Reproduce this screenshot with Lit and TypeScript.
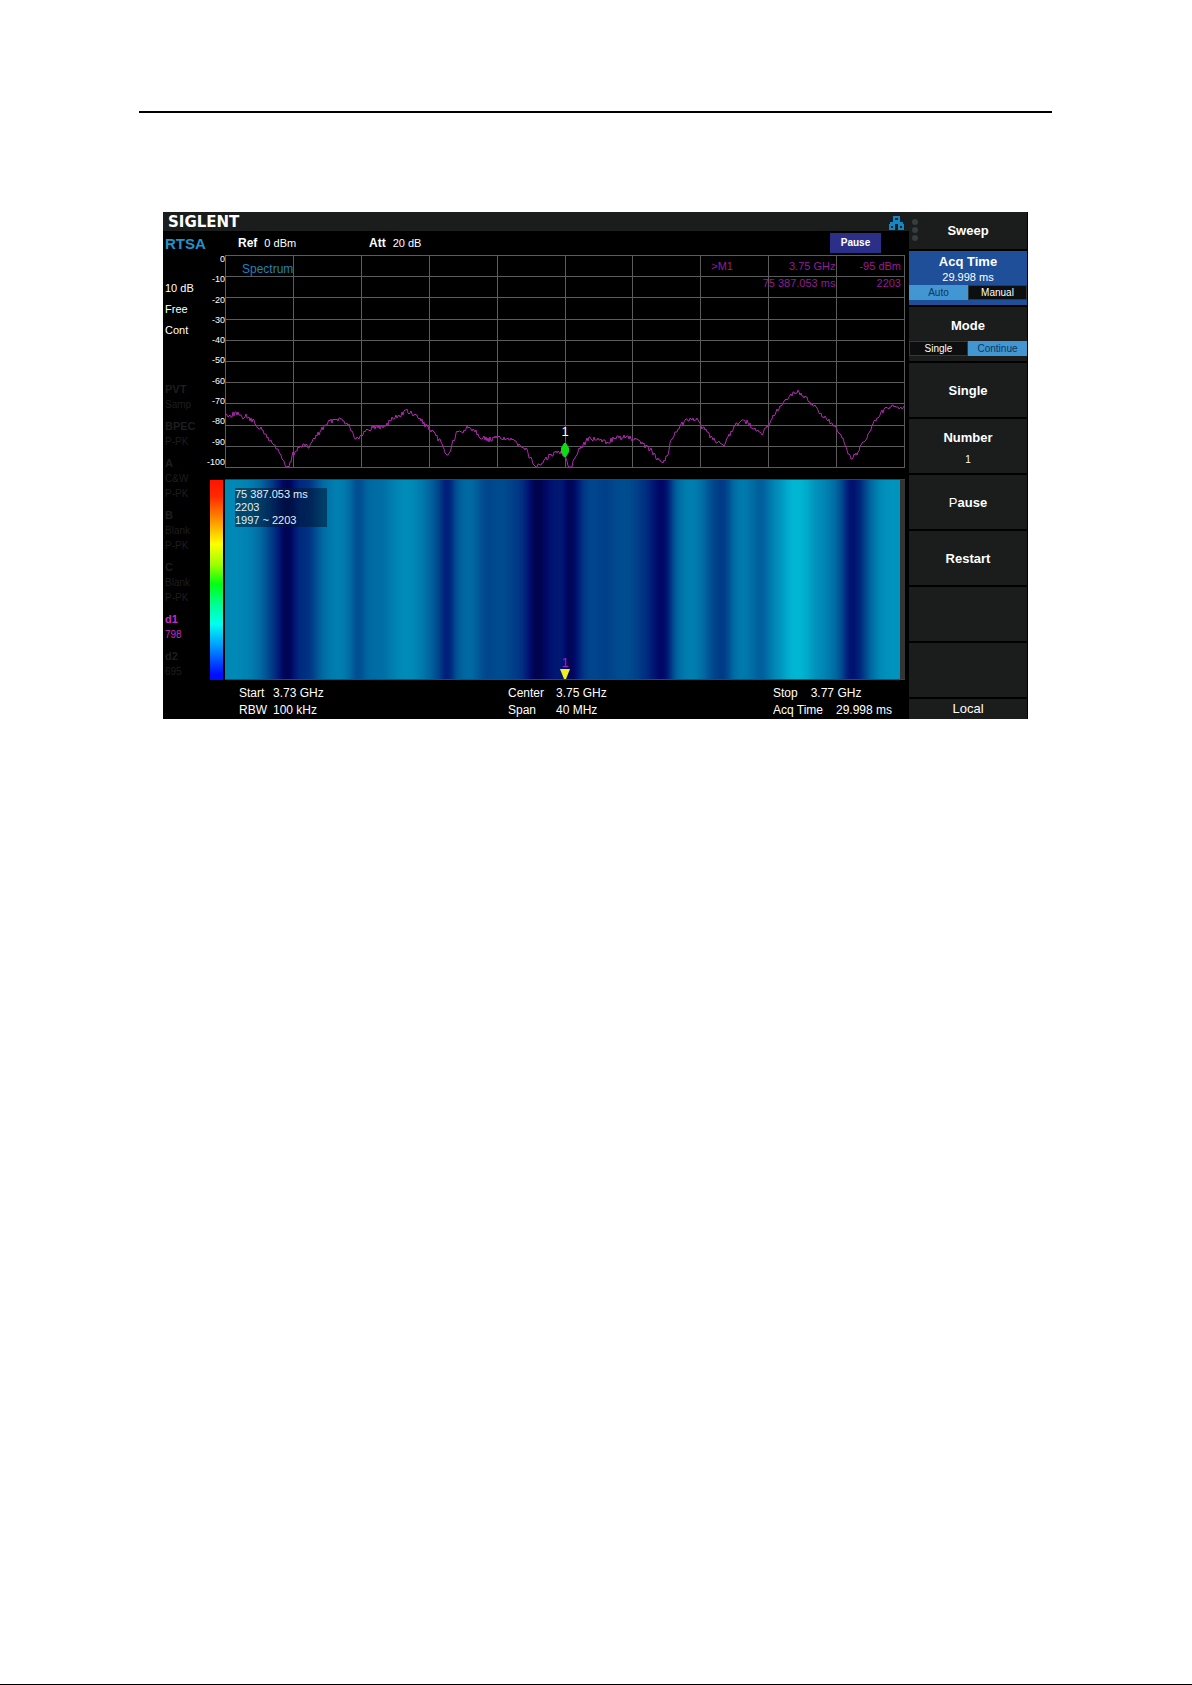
import { LitElement, html, svg, css } from "lit";
import { customElement, property } from "lit/decorators.js";
import { classMap } from "lit/directives/class-map.js";

type Point = [number, number];

const PLOT_W = 680;
const PLOT_H = 213;

/* Spectrum envelope in plot units, 0 dBm at y = 0 and -100 dBm at y = 213. */
const ENVELOPE: Point[] = [
  [0, 160], [5, 160], [12, 158], [15, 162], [20, 161], [28, 166], [35, 173], [43, 183], [48, 189],
  [54, 196], [58, 206], [61, 212], [64, 212], [68, 199], [72, 194], [78, 190], [84, 192], [89, 184],
  [97, 174], [103, 168], [111, 163], [118, 165], [124, 170], [129, 181], [134, 185], [139, 177],
  [148, 172], [158, 172], [167, 164], [175, 160], [181, 156], [187, 159], [195, 164], [202, 172],
  [208, 178], [215, 186], [219, 194], [223, 202], [227, 189], [232, 178], [238, 176], [243, 172],
  [249, 174], [255, 181], [262, 185], [268, 184], [275, 182], [282, 184], [290, 187], [297, 190],
  [302, 196], [307, 207], [312, 212], [317, 208], [323, 202], [330, 198], [335, 197], [340, 199],
  [342, 206], [344, 212], [347, 212], [350, 201], [356, 192], [362, 185], [368, 184], [382, 187],
  [388, 184], [398, 182], [408, 184], [417, 189], [425, 194], [431, 202], [438, 207], [442, 202],
  [445, 189], [450, 178], [456, 169], [465, 163], [473, 166], [479, 174], [487, 184], [495, 187],
  [500, 191], [504, 180], [510, 170], [517, 165], [523, 168], [529, 174], [536, 179], [542, 173],
  [548, 162], [557, 150], [565, 140], [572, 137], [582, 143], [592, 155], [602, 164], [611, 174],
  [618, 185], [623, 198], [626, 203], [632, 198], [639, 187], [645, 176], [652, 163], [660, 154],
  [668, 152], [680, 153],
];

const PALETTE: [number, number, number, number][] = [
  [138, 0, 184, 212], [152, 0, 148, 190], [161, 0, 134, 180], [174, 0, 104, 162],
  [185, 0, 68, 140], [195, 0, 32, 122], [204, 0, 8, 104], [212, 0, 2, 62],
];

function levelAt(x: number): number {
  for (let i = 1; i < ENVELOPE.length; i++) {
    const [x0, y0] = ENVELOPE[i - 1];
    const [x1, y1] = ENVELOPE[i];
    if (x <= x1) return y0 + ((y1 - y0) * (x - x0)) / (x1 - x0);
  }
  return ENVELOPE[ENVELOPE.length - 1][1];
}

function smoothLevel(x: number): number {
  let sum = 0;
  for (let d = -5; d <= 5; d++) sum += levelAt(Math.max(0, x + d));
  return sum / 11;
}

function heat(level: number): string {
  for (let i = 1; i < PALETTE.length; i++) {
    const a = PALETTE[i - 1];
    const b = PALETTE[i];
    if (level <= b[0]) {
      const t = Math.max(0, (level - a[0]) / (b[0] - a[0]));
      const mix = (k: number) => Math.round(a[k] + (b[k] - a[k]) * t);
      return `rgb(${mix(1)},${mix(2)},${mix(3)})`;
    }
  }
  return "rgb(0,2,62)";
}

function tracePath(): string {
  let seed = 7;
  const parts: string[] = [];
  for (let x = 0; x < PLOT_W; x++) {
    seed = (seed * 1103515245 + 12345) % 2147483648;
    const jitter = (seed / 2147483648 - 0.5) * 5;
    const y = Math.min(PLOT_H - 1, Math.round(levelAt(x) + jitter));
    parts.push(`${x ? "L" : "M"}${x} ${y}`);
  }
  return parts.join("");
}

@customElement("spectrum-plot")
class SpectrumPlot extends LitElement {
  static styles = css`
    :host { display: block; position: relative; min-width: 0; }
    .chart { display: block; width: 100%; height: 213px; }
    .grid { stroke: #5c5c5c; stroke-width: 1; fill: none; shape-rendering: crispEdges; vector-effect: non-scaling-stroke; }
    .trace { stroke: #ac28ac; stroke-width: 1; fill: none; vector-effect: non-scaling-stroke; }
    .title { position: absolute; left: 17px; top: 6px; font-size: 12px; line-height: 16px; color: #2482b4; }
    .readout {
      position: absolute; right: 4px; top: 3px; border-collapse: collapse;
      font-size: 11px; line-height: 17px; color: #961c96; text-align: right; white-space: nowrap;
    }
    .readout td { padding: 0 0 0 24px; }
    .readout .name { padding: 0 32px 0 0; text-align: left; }
    .readout .time { padding: 0; }
    .marker { position: absolute; left: 50%; top: 169px; width: 16px; margin-left: -8px; text-align: center; color: #fff; font-size: 13px; line-height: 16px; }
    .diamond { display: block; width: 8px; height: 14px; margin: 3px auto 0; fill: #0fdc14; }
  `;

  render() {
    const lines = Array.from({ length: 11 }, (_, i) => i);
    return html`
      <svg class="chart" viewBox="0 0 ${PLOT_W} ${PLOT_H}" preserveAspectRatio="none" aria-label="Spectrum trace">
        ${lines.map((i) => {
          const x = Math.round((i * (PLOT_W - 1)) / 10) + 0.5;
          const y = Math.round((i * (PLOT_H - 1)) / 10) + 0.5;
          return svg`<path class="grid" d="M${x} 0V${PLOT_H}M0 ${y}H${PLOT_W}"></path>`;
        })}
        <path class="trace" d=${tracePath()}></path>
      </svg>
      <div class="title">Spectrum</div>
      <table class="readout">
        <tr><td class="name">&gt;M1</td><td>3.75 GHz</td><td>-95 dBm</td></tr>
        <tr><td class="time" colspan="2">75 387.053 ms</td><td>2203</td></tr>
      </table>
      <div class="marker">1<svg class="diamond" viewBox="0 0 8 14"><path d="M3 0h2l3 5v4l-3 5H3L0 9V5z"></path></svg></div>
    `;
  }
}

@customElement("waterfall-plot")
class WaterfallPlot extends LitElement {
  static styles = css`
    :host { display: block; position: relative; min-width: 0; background: #343434; border-top: 1px solid #1d4a5e; border-bottom: 1px solid #14506c; box-sizing: border-box; }
    .map { display: block; width: calc(100% - 5px); height: 199px; }
    .info {
      position: absolute; left: 10px; top: 8px; width: 92px; background: rgba(0, 24, 52, 0.55);
      font-size: 11px; line-height: 13px; color: #e4eef4; white-space: nowrap;
    }
    .marker { position: absolute; left: 50%; bottom: 0; width: 10px; margin-left: -5px; text-align: center; color: #b41cb4; font-size: 13px; line-height: 13px; }
    .pointer { display: block; width: 10px; height: 10px; fill: #f0f01e; }
  `;

  render() {
    const stops = Array.from({ length: 341 }, (_, i) => i * 2);
    return html`
      <svg class="map" viewBox="0 0 675 199" preserveAspectRatio="none" aria-label="Waterfall">
        <defs>
          <linearGradient id="heat" x1="0" x2="1" y1="0" y2="0">
            ${stops.map((x) => svg`<stop offset=${x / PLOT_W} stop-color=${heat(smoothLevel(x))}></stop>`)}
          </linearGradient>
        </defs>
        <rect width=${PLOT_W} height="199" fill="url(#heat)"></rect>
      </svg>
      <div class="info">
        <div>75 387.053 ms</div>
        <div>2203</div>
        <div>1997 ~ 2203</div>
      </div>
      <div class="marker">1<svg class="pointer" viewBox="0 0 10 10"><path d="M0 0h10L6 10H4z"></path></svg></div>
    `;
  }
}

@customElement("soft-key")
class SoftKey extends LitElement {
  @property() label = "";
  @property() lead = "";
  @property() value = "";
  @property({ type: Array }) options: string[] = [];
  @property({ type: Number }) selected = 0;
  @property({ type: Boolean, reflect: true }) active = false;

  static styles = css`
    :host { display: flex; flex-direction: column; background: #1a1d1b; color: #fff; min-width: 0; }
    :host([active]) { background: #1f4f98; }
    button { font: inherit; color: inherit; background: none; border: 0; margin: 0; padding: 0; cursor: pointer; }
    .key { flex: 1; display: flex; flex-direction: column; align-items: center; justify-content: center; }
    .label { font-size: 13px; line-height: 17px; font-weight: 700; }
    .lead { font-weight: 400; }
    .value { font-size: 11px; line-height: 15px; }
    .number { justify-content: flex-start; padding-top: 10px; gap: 6px; }
    .number .value { font-size: 10px; }
    .toggled { flex: 0 0 34px; box-sizing: border-box; padding-top: 2px; }
    .toggle { display: grid; grid-template-columns: 1fr 1fr; height: 15px; font-size: 10px; line-height: 15px; }
    .option { background: #0c0f0e; box-shadow: inset 0 0 0 1px #33383a; }
    .option.on { background: #4296d2; color: #0f3560; box-shadow: none; }
  `;

  render() {
    const toggled = this.options.length > 0;
    return html`
      <button class="key ${classMap({ toggled, number: !toggled && !!this.value })}">
        ${this.label ? html`<span class="label"><span class="lead">${this.lead}</span>${this.label}</span>` : ""}
        ${this.value ? html`<span class="value">${this.value}</span>` : ""}
      </button>
      ${toggled
        ? html`<div class="toggle">
            ${this.options.map((o, i) => html`<button class="option ${classMap({ on: i === this.selected })}">${o}</button>`)}
          </div>`
        : ""}
    `;
  }
}

const TRACES = [
  { name: "PVT", lines: ["Samp"] },
  { name: "BPEC", lines: ["P-PK"] },
  { name: "A", lines: ["C&W", "P-PK"] },
  { name: "B", lines: ["Blank", "P-PK"] },
  { name: "C", lines: ["Blank", "P-PK"] },
  { name: "d1", lines: ["798"], on: true },
  { name: "d2", lines: ["695"] },
];

const FOOTER = [
  { kind: "start", rows: [["Start", "3.73 GHz"], ["RBW", "100 kHz"]] },
  { kind: "center", rows: [["Center", "3.75 GHz"], ["Span", "40 MHz"]] },
  { kind: "stop", rows: [["Stop", "3.77 GHz"], ["Acq Time", "29.998 ms"]] },
];

@customElement("app-root")
class AppRoot extends LitElement {
  static styles = css`
    :host { display: block; font-family: "Liberation Sans", Arial, sans-serif; }
    .page { box-sizing: border-box; min-height: 100vh; display: flex; flex-direction: column; background: #fff; padding: 111px 0 0; border-bottom: 1px solid #000; }
    .rule { height: 2px; margin: 0 140px 0 139px; border: 0; background: #000; flex: none; }
    .device { display: grid; grid-template-columns: minmax(0, 1fr) 118px; margin: 99px 164px 0 163px; background: #000; color: #fff; padding-right: 1px; }

    .screen { min-width: 0; padding-right: 4px; display: flex; flex-direction: column; }
    .topbar { box-sizing: border-box; height: 19px; background: #1a1d1b; margin-right: -4px; padding: 2px 5px 0; display: flex; align-items: center; justify-content: space-between; }
    .brand { font-family: "DejaVu Sans", sans-serif; font-weight: 700; font-size: 15px; line-height: 17px; }
    .lan { width: 15px; height: 16px; fill: none; stroke: #1387c6; stroke-width: 2; }
    .status { height: 24px; display: flex; align-items: center; font-size: 11px; padding: 0 24px 0 2px; }
    .mode { font-size: 15px; font-weight: 700; color: #1f93cc; width: 73px; }
    .pair { display: flex; align-items: center; gap: 7px; width: 131px; }
    .pair b { font-size: 12px; }
    .pause { margin-left: auto; width: 51px; height: 20px; border: 0; padding: 0; background: #2b2f88; color: #fff; font: 700 10px/20px "Liberation Sans", Arial, sans-serif; }

    .body { display: grid; grid-template-columns: 44px 18px minmax(0, 1fr); grid-template-rows: 213px 201px; row-gap: 11px; }
    .side { grid-row: 1 / 3; padding: 23px 0 0 2px; display: flex; flex-direction: column; font-size: 10px; line-height: 15px; white-space: nowrap; }
    .setup { font-size: 11px; line-height: 21px; margin-bottom: 41px; }
    .traces { display: flex; flex-direction: column; gap: 7px; color: #1e1e1e; }
    .name { font-size: 11px; font-weight: 700; }
    .on { color: #c42cc4; }
    .scale { display: flex; flex-direction: column; justify-content: space-between; align-items: flex-end; margin: -1px 0 1px; font-size: 9px; line-height: 10px; white-space: nowrap; }
    .ramp { margin: 1px 2px 0 3px; background: linear-gradient(#ff1400, #ff2800 8%, #ff9000 20%, #ffff00 32%, #a0ff00 42%, #00ff10 52%, #00ff90 62%, #00fff0 72%, #0090ff 84%, #0010ff 97%); }

    .foot { display: grid; grid-template-columns: 269fr 265fr 136fr; padding: 5px 0 0 76px; margin-right: -4px; font-size: 12px; line-height: 17px; white-space: nowrap; }
    .row { display: flex; }
    .start .key { min-width: 34px; }
    .center .key { min-width: 48px; }
    .stop .key { margin-right: 13px; }

    .menu { display: grid; grid-template-rows: 37px repeat(8, 54px) 20px; row-gap: 2px; }
    .head { position: relative; background: #1a1d1b; display: flex; align-items: center; justify-content: center; font-size: 13px; font-weight: 700; }
    .dots { position: absolute; left: 3px; top: 7px; width: 6px; height: 24px; fill: #363c40; }
    .local { background: #1a1d1b; font-size: 13px; line-height: 20px; text-align: center; }
  `;

  render() {
    const scale = Array.from({ length: 11 }, (_, i) => (i ? `-${i * 10}` : "0"));
    return html`
      <main class="page">
        <hr class="rule" />
        <section class="device">
          <div class="screen">
            <div class="topbar">
              <span class="brand">SIGLENT</span>
              <svg class="lan" viewBox="0 0 15 16" aria-label="LAN">
                <path d="M5 2h5v4H5zM1 10h4v4H1zM10 10h4v4h-4zM7 6v2M1 8h13"></path>
              </svg>
            </div>
            <div class="status">
              <span class="mode">RTSA</span>
              <span class="pair"><b>Ref</b><span>0 dBm</span></span>
              <span class="pair"><b>Att</b><span>20 dB</span></span>
              <button class="pause">Pause</button>
            </div>
            <div class="body">
              <aside class="side">
                <div class="setup"><div>10 dB</div><div>Free</div><div>Cont</div></div>
                <div class="traces">
                  ${TRACES.map((t) => html`<div class=${classMap({ on: !!t.on })}>
                    <div class="name">${t.name}</div>
                    ${t.lines.map((l) => html`<div>${l}</div>`)}
                  </div>`)}
                </div>
              </aside>
              <div class="scale">${scale.map((s) => html`<span>${s}</span>`)}</div>
              <spectrum-plot></spectrum-plot>
              <div class="ramp"></div>
              <waterfall-plot></waterfall-plot>
            </div>
            <footer class="foot">
              ${FOOTER.map((g) => html`<div class=${g.kind}>
                ${g.rows.map(([k, v]) => html`<div class="row"><span class="key">${k}</span><span>${v}</span></div>`)}
              </div>`)}
            </footer>
          </div>
          <nav class="menu">
            <div class="head">
              <svg class="dots" viewBox="0 0 6 24"><circle cx="3" cy="3" r="3"></circle><circle cx="3" cy="11" r="3"></circle><circle cx="3" cy="19" r="3"></circle></svg>
              Sweep
            </div>
            <soft-key active label="Acq Time" value="29.998 ms" .options=${["Auto", "Manual"]} .selected=${0}></soft-key>
            <soft-key label="Mode" .options=${["Single", "Continue"]} .selected=${1}></soft-key>
            <soft-key label="Single"></soft-key>
            <soft-key label="Number" value="1"></soft-key>
            <soft-key lead="P" label="ause"></soft-key>
            <soft-key label="Restart"></soft-key>
            <soft-key></soft-key>
            <soft-key></soft-key>
            <div class="local">Local</div>
          </nav>
        </section>
      </main>
    `;
  }
}
